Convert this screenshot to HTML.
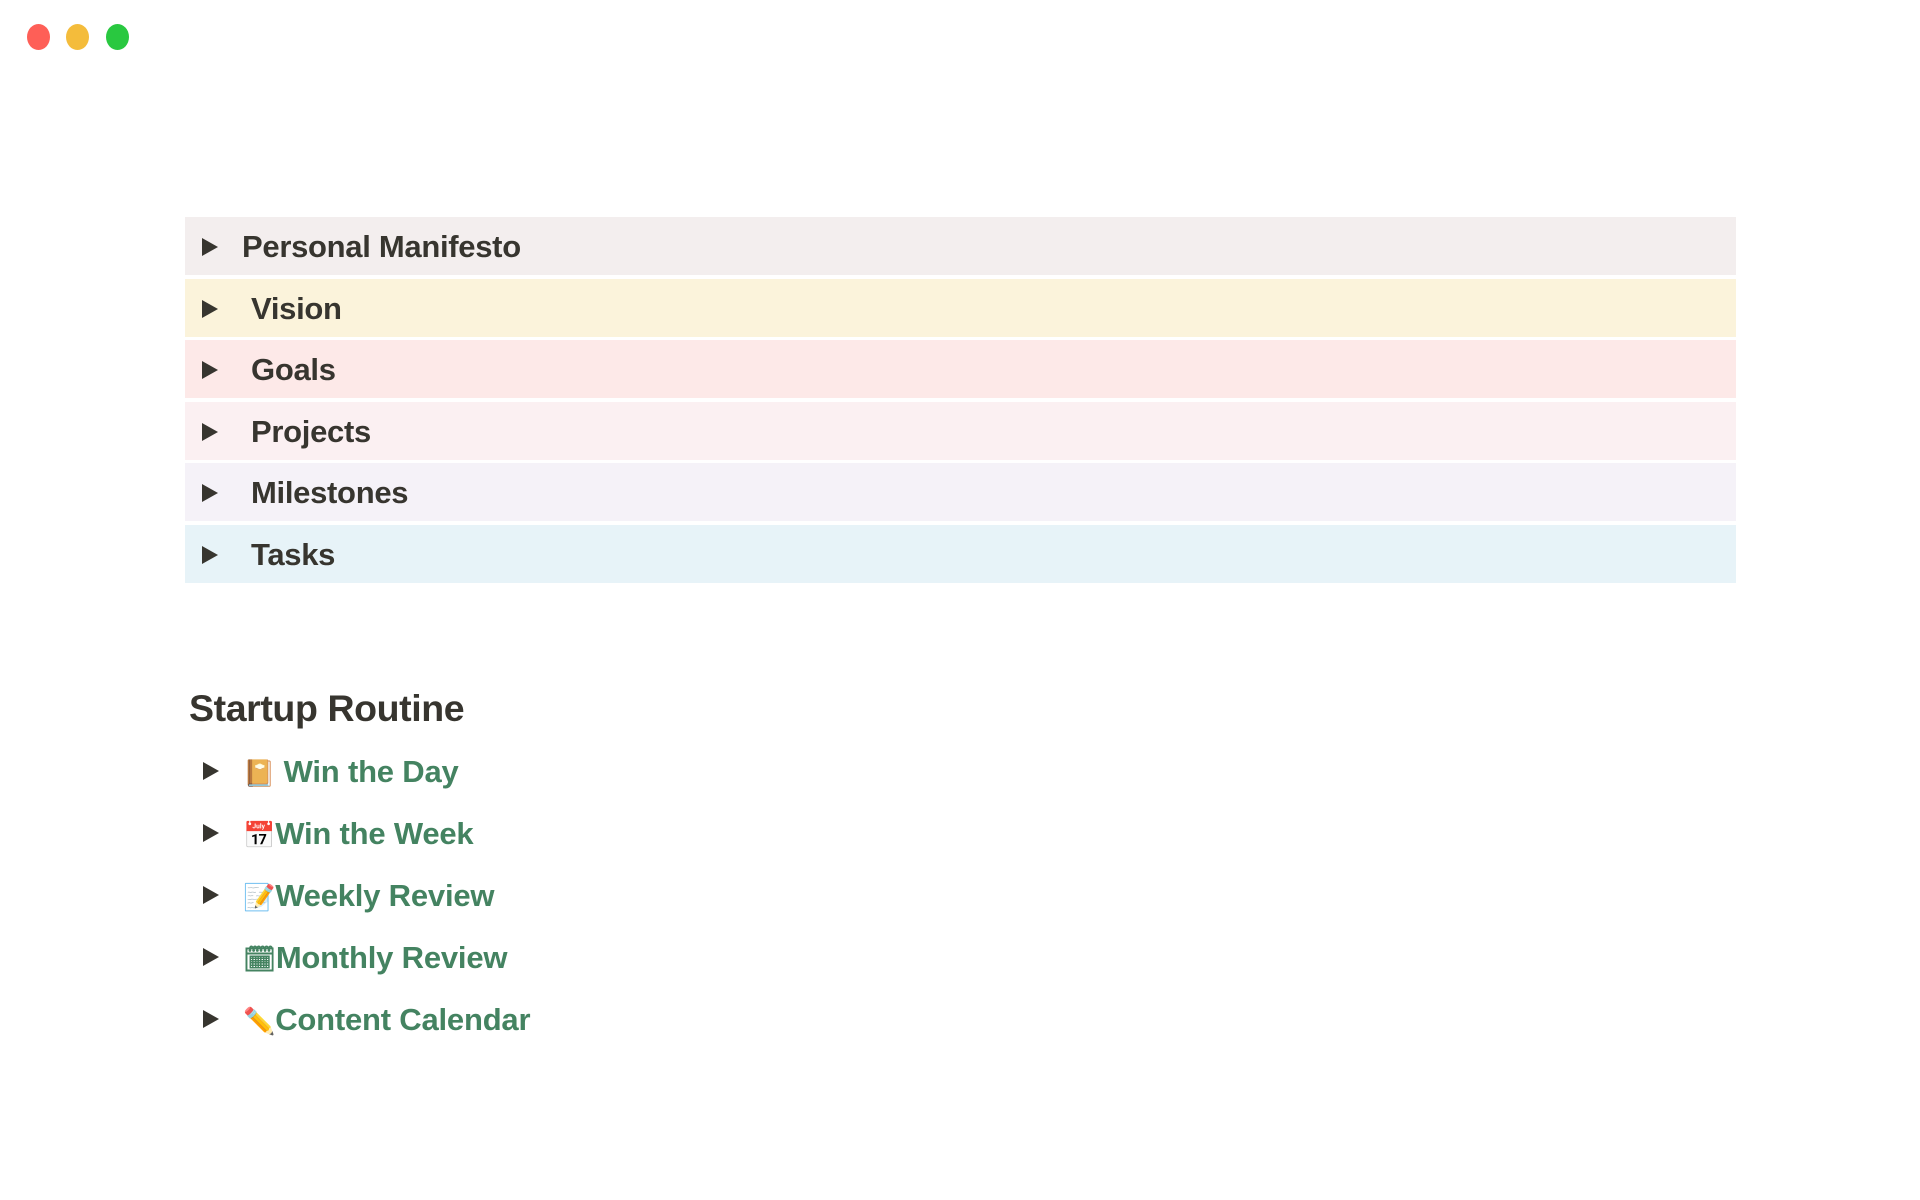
<!DOCTYPE html>
<html><head><meta charset="utf-8"><style>
body{margin:0;width:1920px;height:1200px;background:#fff;font-family:"Liberation Sans",sans-serif;position:relative;overflow:hidden}
.dot{position:absolute;top:24px;width:23px;height:26px;border-radius:50%}
.row{position:absolute;left:185px;width:1551px;height:58px}
.tri{position:absolute;width:0;height:0;border-left:16px solid #37352f;border-top:9px solid transparent;border-bottom:9px solid transparent}
.row .tri{left:17px;top:21px}
.row span{position:absolute;top:12px;font-size:31px;font-weight:bold;color:#37352f;letter-spacing:-0.3px}
.item{position:absolute;left:187px;height:50px;width:600px}
.item .tri{left:16px;top:13px}
.item span{position:absolute;left:56px;top:5px;font-size:31px;font-weight:bold;color:#448361;white-space:nowrap;letter-spacing:-0.2px}
.item i{font-style:normal;font-family:"DejaVu Sans",sans-serif;font-size:26px}
</style></head><body>
<div class="dot" style="left:27px;background:#fe5f57"></div>
<div class="dot" style="left:66px;background:#f4bc3b"></div>
<div class="dot" style="left:106px;background:#29c840"></div>

<div class="row" style="top:217px;background:#f3eeee"><div class="tri"></div><span style="left:57px">Personal Manifesto</span></div>
<div class="row" style="top:279px;background:#fbf3db"><div class="tri"></div><span style="left:66px">Vision</span></div>
<div class="row" style="top:340px;background:#fde9e8"><div class="tri"></div><span style="left:66px">Goals</span></div>
<div class="row" style="top:402px;background:#fbf0f2"><div class="tri"></div><span style="left:66px">Projects</span></div>
<div class="row" style="top:463px;background:#f5f2f8"><div class="tri"></div><span style="left:66px">Milestones</span></div>
<div class="row" style="top:525px;background:#e7f3f8"><div class="tri"></div><span style="left:66px">Tasks</span></div>

<div style="position:absolute;left:189px;top:687px;font-size:37.5px;font-weight:bold;color:#37352f;letter-spacing:-0.4px">Startup Routine</div>

<div class="item" style="top:749px"><div class="tri"></div><span><i>📔</i> Win the Day</span></div>
<div class="item" style="top:811px"><div class="tri"></div><span><i>📅</i>Win the Week</span></div>
<div class="item" style="top:873px"><div class="tri"></div><span><i>📝</i>Weekly Review</span></div>
<div class="item" style="top:935px"><div class="tri"></div><span><i>🗓</i>Monthly Review</span></div>
<div class="item" style="top:997px"><div class="tri"></div><span><i>✏️</i>Content Calendar</span></div>
</body></html>
